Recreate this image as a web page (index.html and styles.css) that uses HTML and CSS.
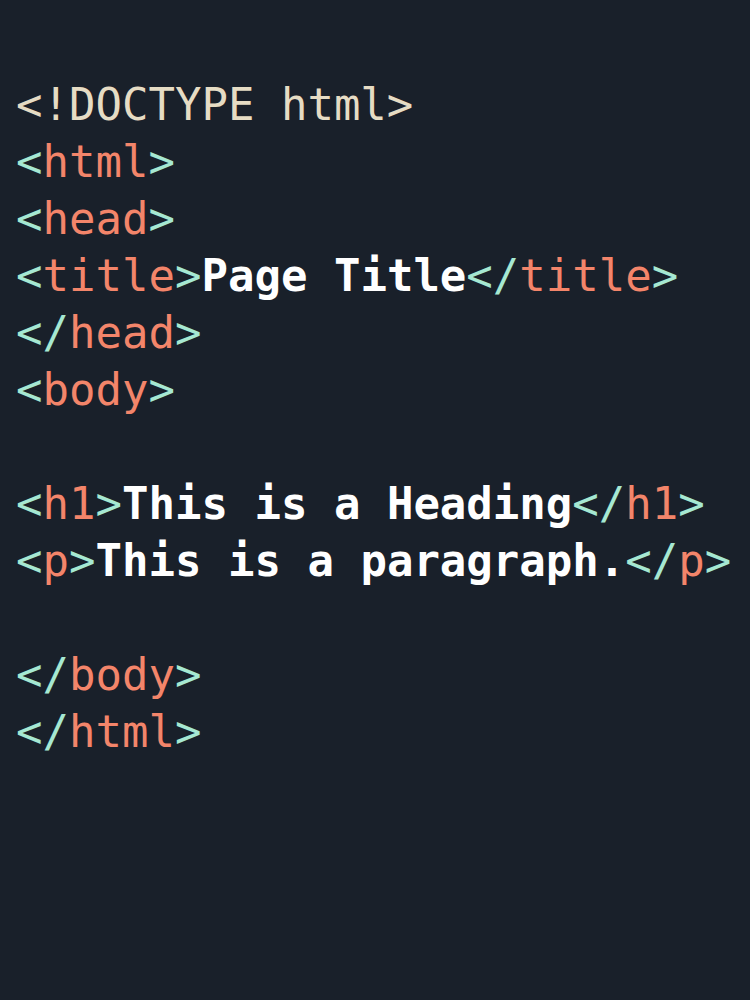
FILE: index.html
```html
<!DOCTYPE html>
<html>
<head>
<meta charset="utf-8">
<link rel="stylesheet" href="styles.css">
</head>
<body>
<pre class="code"><span class="doc">&lt;!DOCTYPE html&gt;</span>
<span class="br">&lt;</span><span class="tg">html</span><span class="br">&gt;</span>
<span class="br">&lt;</span><span class="tg">head</span><span class="br">&gt;</span>
<span class="br">&lt;</span><span class="tg">title</span><span class="br">&gt;</span><span class="tx">Page Title</span><span class="br">&lt;/</span><span class="tg">title</span><span class="br">&gt;</span>
<span class="br">&lt;/</span><span class="tg">head</span><span class="br">&gt;</span>
<span class="br">&lt;</span><span class="tg">body</span><span class="br">&gt;</span>

<span class="br">&lt;</span><span class="tg">h1</span><span class="br">&gt;</span><span class="tx">This is a Heading</span><span class="br">&lt;/</span><span class="tg">h1</span><span class="br">&gt;</span>
<span class="br">&lt;</span><span class="tg">p</span><span class="br">&gt;</span><span class="tx">This is a paragraph.</span><span class="br">&lt;/</span><span class="tg">p</span><span class="br">&gt;</span>

<span class="br">&lt;/</span><span class="tg">body</span><span class="br">&gt;</span>
<span class="br">&lt;/</span><span class="tg">html</span><span class="br">&gt;</span></pre>
</body>
</html>
```
FILE: styles.css
```css
html, body {
  margin: 0;
  padding: 0;
  background: #19202a;
  height: 100%;
}
.code {
  margin: 0;
  padding: 76px 0 0 16px;
  font-family: "DejaVu Sans Mono", monospace;
  font-size: 44px;
  line-height: 57px;
  color: #ffffff;
  white-space: pre;
}
.doc { color: #e6dcc4; }
.br { color: #a6e8d2; }
.tg { color: #f3856a; }
.tx { color: #ffffff; font-weight: bold; }
```
